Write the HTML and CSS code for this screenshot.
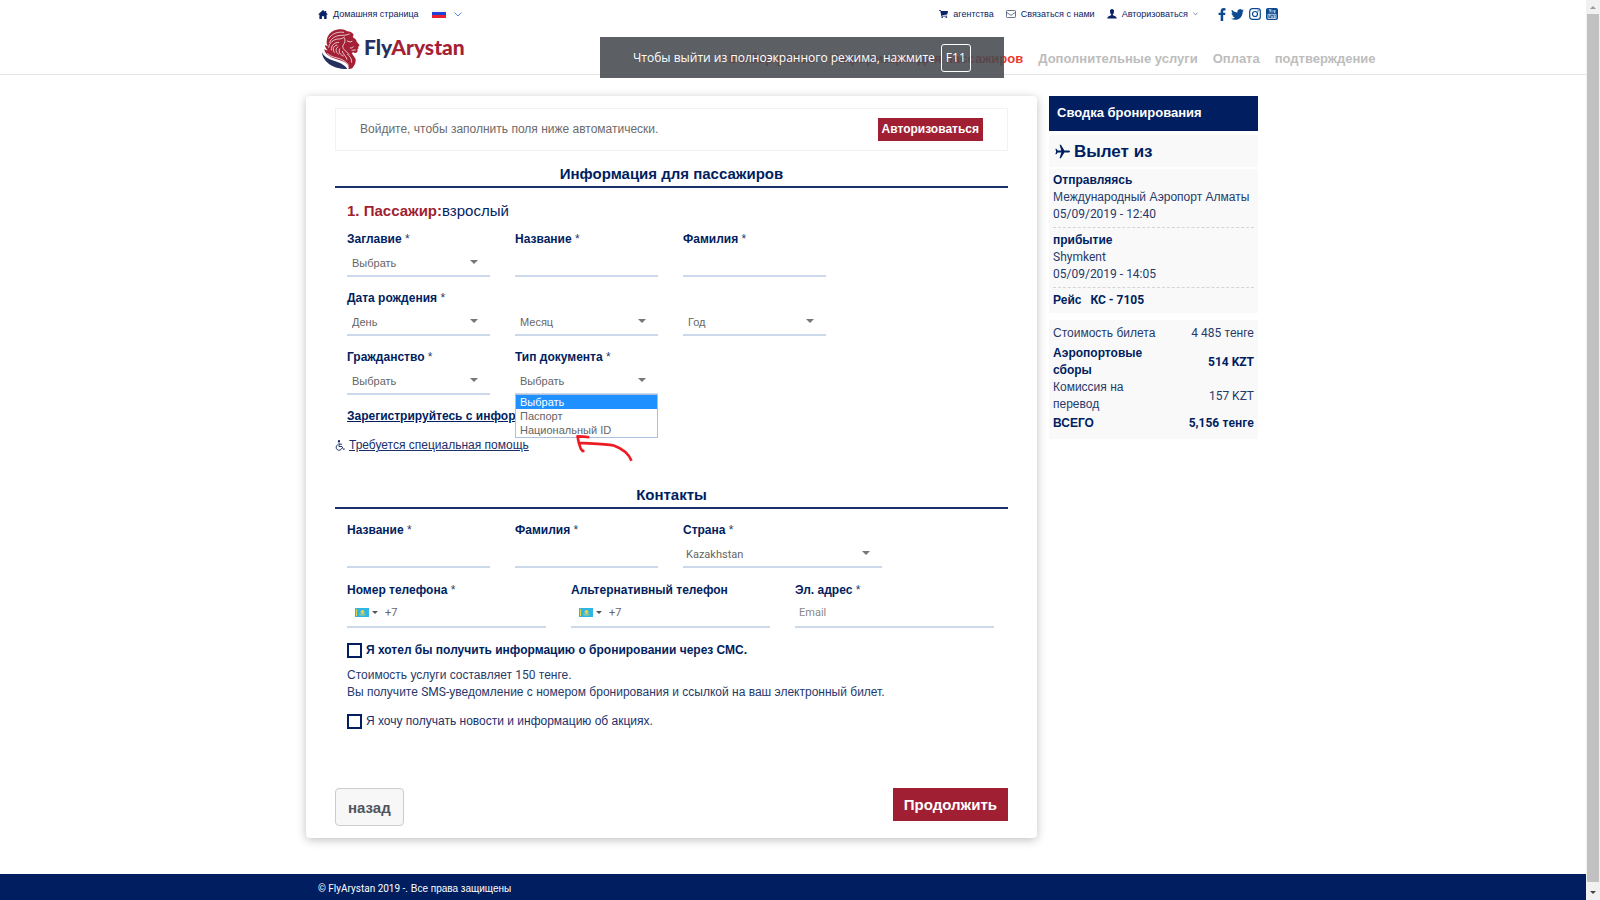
FILE: index.html
```html
<!DOCTYPE html>
<html lang="ru">
<head>
<meta charset="utf-8">
<title>FlyArystan</title>
<link rel="stylesheet" href="styles.css">
</head>
<body>
<div class="page">
  <header class="header">
    <div class="container topbar">
      <div class="topbar-left">
        <a class="top-link" href="#"><svg class="ico-home" viewBox="0 0 18 16"><path d="M9 0L0 8h2.500v8h4.500v-5h4v5h4.500V8H18l-3.200-3V1.500h-2.300v1.600z" fill="#0a2266"/></svg>Домашняя страница</a>
        <button class="lang" aria-label="Язык"><span class="flag-ru"></span><svg class="ico-chev" viewBox="0 0 8 5"><path d="M.5.5L4 4 7.500.5" fill="none" stroke="#5b86e5"/></svg></button>
      </div>
      <nav class="topbar-right">
        <a class="top-link" href="#"><svg class="ico-cart" viewBox="0 0 9 8"><path d="M0 0h1.800l.3 1H9L8.300 4.600 3 5.200l.1.500h5v.7H2.400L1.300.8H0z" fill="#0a2266"/><circle cx="3.200" cy="7.200" r=".8" fill="#0a2266"/><circle cx="7.300" cy="7.200" r=".8" fill="#0a2266"/></svg>агентства</a>
        <a class="top-link" href="#"><svg class="ico-mail" viewBox="0 0 10 8"><rect x=".5" y=".5" width="9" height="7" rx=".8" fill="none" stroke="#44516b" stroke-width=".8"/><path d="M.6 2.300L5 5.400l4.400-3.100" fill="none" stroke="#44516b" stroke-width=".8"/></svg>Связаться с нами</a>
        <a class="top-link" href="#"><svg class="ico-user" viewBox="0 0 10 10"><path d="M5 0C3.500 0 2.900 1 3 2.300c0 1.600.5 2.600 1.200 3.200v.8C2 7 .4 7.600.2 9.500h9.600C9.600 7.600 8 7 5.800 6.300v-.8C6.500 4.900 7 3.900 7 2.300 7.100 1 6.500 0 5 0z" fill="#0a2266"/></svg>Авторизоваться<svg class="ico-caret" viewBox="0 0 6 4"><path d="M.5.5L3 3 5.500.5" fill="none" stroke="#44516b" stroke-width=".8"/></svg></a>
        <span class="social">
          <a href="#" aria-label="Facebook"><svg class="ico-fb" viewBox="0 0 8 13"><path d="M7.500.2v2.200H6.200c-.8 0-1 .4-1 1V4.700h2.200L7.100 7H5.200v6H2.700V7H.6V4.700h2.100V3C2.700 1.100 3.900 0 5.700 0z" fill="#0b4a92"/></svg></a>
          <a href="#" aria-label="Twitter"><svg class="ico-tw" viewBox="0 0 24 20"><path d="M24 2.400c-.9.400-1.800.7-2.800.8 1-.6 1.800-1.600 2.200-2.700-1 .6-2 1-3.100 1.200A4.900 4.900 0 0 0 11.900 6.200C7.800 6 4.100 4 1.700 1 .4 3.200 1 6.100 3.200 7.600c-.8 0-1.600-.2-2.200-.6 0 2.300 1.600 4.400 3.900 4.900-.7.200-1.500.2-2.200.1.600 2 2.400 3.400 4.600 3.400A9.900 9.900 0 0 1 0 17.500 14 14 0 0 0 7.500 19.700c9.100 0 14.300-7.700 14-14.600.9-.7 1.800-1.600 2.500-2.700z" fill="#0b4a92"/></svg></a>
          <a href="#" aria-label="Instagram"><svg class="ico-ig" viewBox="0 0 12 12"><rect x=".7" y=".7" width="10.600" height="10.600" rx="2.600" fill="none" stroke="#0b4a92" stroke-width="1.200"/><circle cx="6" cy="6" r="2.500" fill="none" stroke="#0b4a92" stroke-width="1.200"/><circle cx="9.100" cy="2.900" r=".7" fill="#0b4a92"/></svg></a>
          <a href="#" aria-label="YouTube"><svg class="ico-yt" viewBox="0 0 12 12"><rect width="12" height="12" rx="2" fill="#0b4a92"/><path d="M3 1l1.100 2v1.600M5.100 1L4.100 3M6 2.200v2.200M8 2v2.400h1V2M2 6.300h8v4.200H2z" fill="none" stroke="#fff" stroke-width=".7"/><path d="M3 7.200h1.600M3.800 7.200v2.500M5.600 7.700v2h1v-2M8 7v2.700h1V8H8" fill="none" stroke="#fff" stroke-width=".6"/></svg></a>
        </span>
      </nav>
    </div>
    <div class="container brandbar">
      <a class="logo" href="#">
        <svg class="lion" viewBox="60 84 120 126">
          <path d="M63 156c4 13 20 22 38 27 18 6 30 12 38 24-18 1-41-5-56-16-13-10-20-22-20-35z" fill="#25305f"/>
          <path d="M78 117c3-15 17-27 36-29 13-2 21 2 25 6 8 0 16 4 19 11-2 3-3 5-2 7 8 5 11 9 11 13l8 9c1 3-1 5-4 6l2 5-4 3 1 6c-2 5-9 6-13 3l-5 2 12 18c1 9-2 18-9 26-4 3-8 4-12 4 1-9-4-16-13-21-17-8-38-9-52-23-5-5-8-11-8-17 3 4 6 5 10 5-5-5-8-10-8-16 3 2 6 3 9 3-4-5-5-9-3-21z" fill="#a42035"/>
          <g fill="none" stroke="#fff" stroke-linecap="round" stroke-width="2.200">
            <path d="M84 115c9-14 26-21 44-18"/><path d="M86 127c6-14 20-21 37-21 10 0 17-2 22-4"/><path d="M83 142c2-14 14-24 29-25 9 0 13-2 18-6"/><path d="M91 150c-1-14 9-23 22-23"/><path d="M100 157c-7-9-3-20 8-22"/><path d="M112 162c-9-6-9-16-1-22"/><path d="M127 168c-11-4-15-12-11-21"/><path d="M138 178c-3-11-12-14-14-24"/><path d="M152 187c1-11-5-17-12-24"/><path d="M80 161c12 13 31 11 45 19 9 5 14 9 17 16"/>
            <path d="M131 115c2 7 1 14-4 19-3 5-2 10 3 15l14 14"/><path d="M139 123l8 3 6-2M148 144c4 1 7-1 9-4M153 151l10-1"/>
          </g>
        </svg>
        <span class="logo-text"><span class="logo-fly">Fly</span>Arystan</span>
      </a>
      <nav class="steps">
        <a class="step step-on" href="#">Выбор рейса</a>
        <a class="step step-on" href="#">Информация для пассажиров</a>
        <a class="step" href="#">Дополнительные услуги</a>
        <a class="step" href="#">Оплата</a>
        <a class="step" href="#">подтверждение</a>
      </nav>
    </div>
  </header>

  <div class="toast"><span>Чтобы выйти из полноэкранного режима, нажмите</span><kbd class="key">F11</kbd></div>

  <main class="container content">
    <form class="card">
      <div class="login">
        <span>Войдите, чтобы заполнить поля ниже автоматически.</span>
        <button class="btn-login" type="button">Авторизоваться</button>
      </div>

      <h2 class="section-title">Информация для пассажиров</h2>
      <section class="passenger">
        <h3 class="pax"><b>1. Пассажир:</b>взрослый</h3>
        <div class="row">
          <div class="field"><label for="title"><b>Заглавие</b> *</label><div class="select"><select id="title"><option>Выбрать</option></select></div></div>
          <div class="field"><label for="name"><b>Название</b> *</label><input id="name" type="text"></div>
          <div class="field"><label for="surname"><b>Фамилия</b> *</label><input id="surname" type="text"></div>
        </div>
        <div class="row">
          <div class="field"><label for="day"><b>Дата рождения</b> *</label><div class="select"><select id="day"><option>День</option></select></div></div>
          <div class="field field-end"><div class="select"><select aria-label="Месяц"><option>Месяц</option></select></div></div>
          <div class="field field-end"><div class="select"><select aria-label="Год"><option>Год</option></select></div></div>
        </div>
        <div class="row">
          <div class="field"><label for="citizen"><b>Гражданство</b> *</label><div class="select"><select id="citizen"><option>Выбрать</option></select></div></div>
          <div class="field"><label for="doc"><b>Тип документа</b> *</label><div class="select"><select id="doc"><option>Выбрать</option><option>Паспорт</option><option>Национальный ID</option></select>
            <ul class="menu"><li class="menu-on">Выбрать</li><li>Паспорт</li><li>Национальный ID</li></ul>
            <svg class="arrow" viewBox="768 282 172 82"><path d="M808 289l-18-2-18-1 4 20 6 18 6 7 5-1M778 306c30 2 78 2 104 8 25 9 44 22 54 46" fill="none" stroke="#ed1c24" stroke-width="8" stroke-linejoin="round"/></svg>
          </div></div>
        </div>
        <a class="ffp" href="#">Зарегистрируйтесь с информацией</a>
      </section>
      <div class="help"><svg class="ico-wheel" viewBox="0 0 10 11"><circle cx="4" cy="1.200" r="1.100" fill="#0a2266"/><path d="M4 2.300v4.200h3l1.500 3 1.300-.6M4.200 4.200h2.900M2.800 4.700A2.900 2.900 0 1 0 6.800 8.200" fill="none" stroke="#0a2266" stroke-width=".9"/></svg><a href="#">Требуется специальная помощь</a></div>

      <h2 class="section-title contacts-title">Контакты</h2>
      <section class="contacts">
        <div class="row">
          <div class="field"><label for="cname"><b>Название</b> *</label><input id="cname" type="text"></div>
          <div class="field"><label for="csurname"><b>Фамилия</b> *</label><input id="csurname" type="text"></div>
          <div class="field field-wide"><label for="country"><b>Страна</b> *</label><div class="select select-country"><select id="country"><option>Kazakhstan</option></select></div></div>
        </div>
        <div class="row">
          <div class="field field-wide"><label for="phone"><b>Номер телефона</b> *</label><div class="phone"><span class="flag-kz"><svg viewBox="0 0 14 9"><rect width="14" height="9" fill="#2fb5e3"/><path d="M1.500 1v7" stroke="#d9d45a"/><circle cx="7.500" cy="4" r="2" fill="#e2d24c"/><path d="M4.500 6c1 1.500 5 1.500 6 0" stroke="#e2d24c" fill="none"/></svg></span><span class="tri"></span><input id="phone" type="tel" value="+7"></div></div>
          <div class="field field-wide"><label for="phone2"><b>Альтернативный телефон</b></label><div class="phone"><span class="flag-kz"><svg viewBox="0 0 14 9"><rect width="14" height="9" fill="#2fb5e3"/><path d="M1.500 1v7" stroke="#d9d45a"/><circle cx="7.500" cy="4" r="2" fill="#e2d24c"/><path d="M4.500 6c1 1.500 5 1.500 6 0" stroke="#e2d24c" fill="none"/></svg></span><span class="tri"></span><input id="phone2" type="tel" value="+7"></div></div>
          <div class="field field-wide"><label for="email"><b>Эл. адрес</b> *</label><input id="email" type="email" placeholder="Email"></div>
        </div>
        <label class="check check-bold"><input type="checkbox">Я хотел бы получить информацию о бронировании через СМС.</label>
        <p class="note">Стоимость услуги составляет <span class="latin">150</span> тенге.<br>Вы получите <span class="latin">SMS-</span>уведомление с номером бронирования и ссылкой на ваш электронный билет.</p>
        <label class="check"><input type="checkbox">Я хочу получать новости и информацию об акциях.</label>
      </section>

      <div class="actions">
        <button class="btn-back" type="button">назад</button>
        <button class="btn-next" type="submit">Продолжить</button>
      </div>
    </form>

    <aside class="summary">
      <h2 class="summary-title">Сводка бронирования</h2>
      <h3 class="summary-dep"><svg class="ico-plane" viewBox="0 0 16 16"><path d="M16 8c0-.7-1-1.100-2-1.100H10L6.300.8H4.900l1.800 6.100H3L1.500 5H.4l.8 3-.8 3h1.100L3 9.100h3.700L4.900 15.200h1.400L10 9.100h4c1 0 2-.4 2-1.100z" fill="#001e60"/></svg>Вылет из</h3>
      <div class="panel flight">
        <div class="leg"><b>Отправляясь</b><br>Международный Аэропорт Алматы<br><span class="latin">05/09/2019 - 12:40</span></div>
        <div class="leg"><b>прибытие</b><br><span class="latin">Shymkent<br>05/09/2019 - 14:05</span></div>
        <div class="flight-no"><b>Рейс</b><b class="latin">КС - 7105</b></div>
      </div>
      <table class="panel costs">
        <tr><td>Стоимость билета</td><td><span class="latin">4 485</span> тенге</td></tr>
        <tr class="strong"><td>Аэропортовые сборы</td><td class="latin">514 KZT</td></tr>
        <tr><td>Комиссия на перевод</td><td class="latin">157 KZT</td></tr>
        <tr class="strong total"><td>ВСЕГО</td><td><span class="latin">5,156</span> тенге</td></tr>
      </table>
    </aside>
  </main>

  <footer class="footer"><div class="container footer-in"><span class="latin">© FlyArystan 2019 -.</span> Все права защищены</div></footer>
</div>
<div class="scrollbar" aria-hidden="true"><span class="sb-up"></span><span class="sb-thumb"></span><span class="sb-down"></span></div>
</body>
</html>
```
FILE: styles.css
```css
* { box-sizing: border-box; }
body {
  margin: 0;
  display: flex;
  min-height: 100vh;
  background: #fff;
  color: #27396b;
  font: 12px/17px "Liberation Sans", Arial, sans-serif;
}
a { color: inherit; text-decoration: none; }
h2, h3, p, ul { margin: 0; padding: 0; }
button, input, select { font: inherit; color: inherit; margin: 0; padding: 0; border: 0; border-radius: 0; background: none; }
svg { display: block; flex: none; }
b, .strong, .flight-no { color: #001e60; }
.latin { font-family: Roboto, sans-serif; }

.page { flex: 1; min-width: 0; display: flex; flex-direction: column; position: relative; }
.container { width: 100%; max-width: 974px; margin: 0 auto; }

.header { height: 75px; border-bottom: 1px solid #e4e4e4; }
.topbar { display: flex; justify-content: space-between; height: 28px; padding: 0 2px 0 12px; font-size: 9px; color: #0a2266; }
.topbar-left, .topbar-right, .top-link, .social, .lang { display: flex; align-items: center; }
.topbar-left { gap: 13px; }
.topbar-right { gap: 12px; }
.top-link { gap: 5px; }
.lang { gap: 8px; }
.flag-ru { width: 14px; height: 8px; background: linear-gradient(#f4f4f4 0 25%, #2340d8 25% 65%, #e8202c 65%); }
.ico-home { width: 10px; height: 9px; }
.ico-chev { width: 8px; height: 5px; }
.ico-cart { width: 9px; height: 8px; }
.ico-mail { width: 10px; height: 8px; }
.ico-user { width: 10px; height: 10px; }
.ico-caret { width: 5px; height: 4px; }
.social { gap: 5px; margin-left: 8px; }
.ico-fb { width: 8px; height: 13px; }
.ico-tw { width: 13px; height: 11px; }
.ico-ig, .ico-yt { width: 12px; height: 12px; }

.brandbar { display: flex; height: 46px; padding-left: 15px; white-space: nowrap; }
.logo { display: flex; gap: 3px; width: 144px; height: 42px; align-items: center; }
.lion { width: 40px; height: 42px; }
.logo-text { font: 900 21px/38px Lato, sans-serif; color: #a42035; align-self: flex-start; }
.logo-fly { color: #25305f; }
.steps { display: flex; gap: 15px; margin-left: 264px; align-items: center; height: 61px; font-size: 13px; font-weight: bold; color: #bdbdbd; }
.step-on { color: #ee3a30; }

.toast {
  position: absolute; left: 600px; top: 37px; z-index: 2;
  display: flex; align-items: center; gap: 6px;
  height: 41px; padding: 0 33px;
  background: rgba(70, 73, 78, .88); color: #fff;
  font: 12px/18px "Open Sans", sans-serif; white-space: nowrap;
}
.key { font: inherit; border: 1px solid #fff; border-radius: 3px; padding: 4px; }

.content { display: flex; align-items: flex-start; gap: 12px; padding: 21px 22px 36px 0; flex: 1; }
.card { flex: 1; padding: 12px 29px; background: #fff; border-radius: 4px; box-shadow: 0 2px 10px rgba(0, 0, 0, .25); }
.login { display: flex; justify-content: space-between; align-items: center; height: 43px; padding: 0 24px; border: 1px solid #f2f2f2; color: #6b6b6b; }
.btn-login { background: #a01f33; color: #fff; font-weight: bold; height: 23px; padding: 0 4px; }
.section-title { margin-top: 12px; padding-bottom: 2px; border-bottom: 2px solid #1b2f6b; text-align: center; font-size: 15px; line-height: 21px; color: #001e60; }

.passenger, .contacts { padding: 0 12px; }
.pax { margin-top: 13px; margin-bottom: 10px; font-size: 15px; line-height: 20px; font-weight: normal; color: #001e60; }
.pax b { color: #a01f33; }
.row { display: flex; gap: 25px; height: 59px; }
.field { width: 143px; display: flex; flex-direction: column; }
.field-wide { width: 199px; }
.field-end { justify-content: flex-start; padding-top: 17px; }
.field input, .select { width: 100%; height: 29px; border-bottom: 2px solid #ccd9ea; color: #666; font-size: 11px; }
.field input { font-family: Roboto, sans-serif; padding: 0 4px; outline: 0; }
.field input::placeholder { color: #8a8a8a; opacity: 1; }
.select { position: relative; }
.select select { width: 100%; height: 30px; padding: 0 5px; appearance: none; outline: 0; }
.select::after { content: ""; position: absolute; right: 12px; top: 12px; border: 4px solid transparent; border-top-color: #777; border-bottom: 0; }
.menu { position: absolute; left: 0; top: 28px; width: 100%; z-index: 1; list-style: none; background: #fff; border: 1px solid #aebedd; line-height: 14px; }
.menu li { padding: 0 4px; height: 14px; }
.menu .menu-on { background: #1e90ff; color: #fff; }
.arrow { position: absolute; z-index: 2; left: 61px; top: 69px; width: 57px; height: 27px; }
.ffp { display: block; font-weight: bold; text-decoration: underline; color: #001e60; }
.help { display: flex; align-items: center; gap: 4px; margin-top: 12px; color: #1b2f6b; }
.help a { text-decoration: underline; }
.ico-wheel { width: 10px; height: 11px; }

.contacts-title { margin-top: 30px; }
.contacts { padding-top: 13px; }
.contacts .row { height: 60px; }
.select-country select, .select-country { font-family: Roboto, sans-serif; }
.select-country select { padding: 0 3px; }
.phone { display: flex; align-items: center; height: 29px; padding-left: 8px; border-bottom: 2px solid #ccd9ea; }
.phone input { flex: 1; min-width: 0; border: 0; }
.flag-kz svg { width: 14px; height: 9px; }
.tri { margin: 0 3px; border: 3px solid transparent; border-top-color: #555; border-bottom: 0; }
.check { display: flex; align-items: center; gap: 4px; height: 17px; color: #1b2f6b; }
.check input { appearance: none; width: 15px; height: 15px; border: 2px solid #001e60; }
.check-bold { font-weight: bold; color: #001e60; }
.note { margin: 8px 0 12px; }

.actions { display: flex; justify-content: space-between; align-items: flex-start; margin-top: 58px; }
.btn-back { height: 38px; padding: 0 12px; background: #f7f7f7; border: 1px solid #ccc; border-radius: 4px; font-size: 15px; font-weight: bold; color: #50545c; }
.btn-next { height: 33px; padding: 0 11px; background: #a01f33; color: #fff; font-size: 15px; font-weight: bold; }

.summary { width: 209px; }
.summary-title { height: 35px; padding: 0 8px; background: #001e60; color: #fff; font-size: 13px; line-height: 34px; }
.summary-dep { display: flex; align-items: center; gap: 4px; height: 32px; margin: 4px 0 2px; padding: 0 6px; background: #f9f9f9; color: #001e60; font-size: 17px; }
.ico-plane { width: 15px; height: 15px; }
.panel { background: #f9f9f9; }
.flight { padding: 3px 4px 4px; }
.leg { padding-bottom: 4px; margin-bottom: 4px; border-bottom: 1px dashed #d5d5d5; }
.flight-no { display: flex; gap: 9px; }
.costs { width: 100%; margin-top: 7px; padding: 5px 2px 7px; border-spacing: 0; }
.costs td { padding: 0 2px; }
.costs td:first-child { width: 55%; }
.costs td:last-child { text-align: right; white-space: nowrap; }
.costs .strong { font-weight: bold; }
.costs tr:nth-child(2) td { padding-top: 3px; }
.costs .total td { padding-top: 2px; }

.footer { height: 26px; background: #001e60; color: #fff; }
.footer-in { padding: 7px 12px; font-size: 10px; line-height: 16px; }

.scrollbar { width: 14px; background: #f1f1f1; display: flex; flex-direction: column; align-items: center; padding: 6px 0; }
.sb-thumb { flex: 1; width: 12px; margin: 5px 0 9px; background: #c1c1c1; }
.sb-up { border: 3px solid transparent; border-top: 0; border-bottom-color: #999; }
.sb-down { border: 3px solid transparent; border-bottom: 0; border-top-color: #444; }
```
